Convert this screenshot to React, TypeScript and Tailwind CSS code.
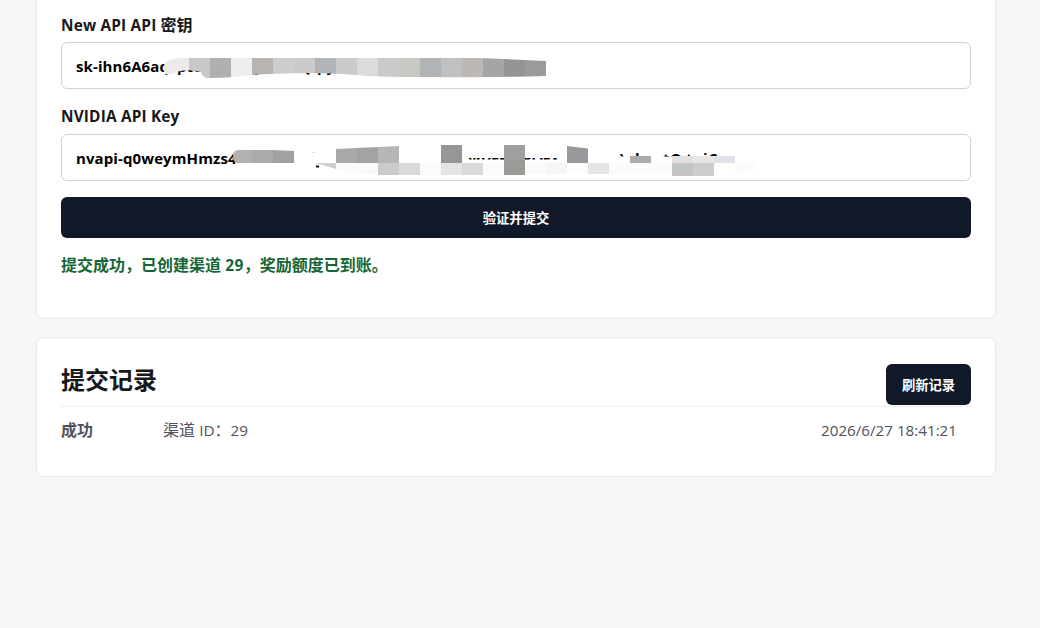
import type { ReactNode } from "react";

type Cell = [x: number, y: number, w: number, h: number, fill: string];

const keyCells: Cell[] = [
  [163, 57, 26, 22, "#edebea"],
  [189, 57, 21, 22, "#c9c8c6"],
  [210, 57, 21, 22, "#b2b0ae"],
  [231, 57, 21, 22, "#ecedec"],
  [252, 57, 21, 22, "#b7b4b2"],
  [273, 57, 21, 22, "#cccdcf"],
  [294, 57, 21, 22, "#cacaca"],
  [315, 57, 21, 22, "#b2b5b7"],
  [336, 57, 21, 22, "#cbcbcb"],
  [357, 57, 21, 22, "#d9dbdd"],
  [378, 57, 21, 22, "#cbcac8"],
  [399, 57, 21, 22, "#c8c7c4"],
  [420, 57, 21, 22, "#b1b4b6"],
  [441, 57, 21, 22, "#c0c0c0"],
  [462, 57, 21, 22, "#bcb8b4"],
  [483, 57, 21, 22, "#a5a5a5"],
  [504, 57, 21, 22, "#949597"],
  [525, 57, 21, 22, "#9c9b99"],
];

const nvidiaCells: Cell[] = [
  [231, 149, 21, 14, "#b2b1af"],
  [252, 149, 21, 14, "#acaba9"],
  [273, 149, 21, 14, "#a0a1a3"],
  [315, 163, 21, 12, "#cfd0d1"],
  [336, 145, 21, 18, "#a9a9a9"],
  [357, 145, 21, 18, "#a2a3a5"],
  [378, 145, 21, 18, "#b6b6b6"],
  [336, 163, 42, 12, "#f9f9f9"],
  [378, 163, 21, 12, "#c9cbca"],
  [399, 163, 21, 12, "#d9d9d9"],
  [420, 163, 21, 12, "#fbfbfb"],
  [441, 145, 21, 18, "#989694"],
  [441, 163, 21, 12, "#e4e4e4"],
  [462, 163, 21, 12, "#d9d9d9"],
  [483, 163, 21, 12, "#fbfbfb"],
  [504, 145, 21, 15, "#9f9f9f"],
  [504, 160, 21, 15, "#9c9a96"],
  [525, 163, 21, 11, "#fafafa"],
  [546, 163, 21, 11, "#f5f6f6"],
  [567, 145, 21, 18, "#98999d"],
  [567, 163, 21, 11, "#fcfcfc"],
  [588, 163, 21, 11, "#e4e4e4"],
  [609, 163, 63, 13, "#fbfbfb"],
  [630, 156, 21, 7, "#b0aba7"],
  [672, 156, 21, 7, "#e3e0df"],
  [693, 156, 21, 7, "#e8e6e4"],
  [714, 156, 21, 7, "#e0e2e7"],
  [672, 163, 21, 13, "#c2c4c6"],
  [693, 163, 21, 13, "#cfcdcb"],
  [714, 163, 21, 13, "#ffffff"],
  [735, 163, 21, 13, "#fbfbfb"],
];

function Cells({ cells }: { cells: Cell[] }) {
  return (
    <>
      {cells.map(([x, y, w, h, fill]) => (
        <rect key={`${x}-${y}`} x={x} y={y} width={w} height={h} fill={fill} />
      ))}
    </>
  );
}

function KeyMask() {
  return (
    <svg viewBox="61 42 910 47" className="pointer-events-none absolute -top-px -left-px h-[47px] w-[910px] text-[15px] font-bold">
      <clipPath id="key-mask">
        <path d="M163 67Q165 59 179 58H480L546 61V76Q500 77.500 420 77Q375 77 356 75Q320 72 284 73.500Q265 74 250 75Q232 78 208 78Q203 78 201 72Q190 69 180 71L168 75Q163 73 163 67Z" />
      </clipPath>
      <text y="72">
        <tspan x="177">ptcs</tspan>
        <tspan x="254">y</tspan>
        <tspan x="299">Q</tspan>
        <tspan x="317">py</tspan>
      </text>
      <g clipPath="url(#key-mask)">
        <Cells cells={keyCells} />
      </g>
    </svg>
  );
}

function NvidiaMask() {
  return (
    <svg viewBox="61 134 910 47" className="pointer-events-none absolute -top-px -left-px h-[47px] w-[910px] text-[15px] font-bold">
      <clipPath id="nvidia-mask">
        <path d="M233 156Q233 150 239 150H273L294 151V163H237Q233 162 233 156ZM315 163H336V149L399 146V163H441V145H462V163H504V145H525V163H567V146L588 148.500V163H630V156H651V163H672V156H735V163H756Q757 172 742 174H714V176H672V174H525V175H378L350 172L336 169Z" />
      </clipPath>
      <clipPath id="strip-middle">
        <rect x="466" y="158" width="97" height="1.500" />
      </clipPath>
      <clipPath id="strip-right">
        <rect x="618" y="152.500" width="110" height="4" />
      </clipPath>
      <rect x="316" y="165.500" width="3" height="2" fill="#111" />
      <rect x="312" y="152" width="3" height="1" fill="#ddd" />
      <text x="468" y="164" textLength="92" clipPath="url(#strip-middle)">
        vnzERHIROEX
      </text>
      <text y="164" clipPath="url(#strip-right)">
        <tspan x="620">\</tspan>
        <tspan x="635">l</tspan>
        <tspan x="663">t</tspan>
        <tspan x="670">O</tspan>
        <tspan x="686">t</tspan>
        <tspan x="703">i</tspan>
        <tspan x="708">C</tspan>
      </text>
      <g clipPath="url(#nvidia-mask)">
        <Cells cells={nvidiaCells} />
      </g>
    </svg>
  );
}

function Field({ label, value, children }: { label: ReactNode; value: ReactNode; children: ReactNode }) {
  return (
    <div>
      <div className="h-6 pt-px text-[15.4px] leading-6 font-bold tracking-[0.17px] text-[#18181b]">{label}</div>
      <div className="relative mt-1.5 flex h-[47px] items-center rounded-md border border-[#d1d2d6] bg-white px-3.5 pt-0.5 text-[15px] font-bold text-black">
        <span className="tracking-[0.1px]">{value}</span>
        {children}
      </div>
    </div>
  );
}

export default function App() {
  return (
    <main className="h-[628px] overflow-hidden bg-[#f6f7f9] pr-11 pl-9 font-['Open_Sans','Noto_Sans_CJK_SC',sans-serif]">
      <section className="h-[319px] rounded-b-lg border border-t-0 border-[#e5e7eb] bg-white px-6 pt-3">
        <div className="flex flex-col gap-[15px]">
          <Field
            label={<>New API API <span className="text-base tracking-normal">密钥</span></>}
            value="sk-ihn6A6aq"
          >
            <KeyMask />
          </Field>
          <Field label="NVIDIA API Key" value="nvapi-q0weymHmzs4">
            <NvidiaMask />
          </Field>
        </div>
        <button className="mt-4 flex h-[41px] w-full items-center justify-center rounded-md bg-[#111827] pt-0.5 text-[13.3px] font-bold text-white">
          验证并提交
        </button>
        <p className="mt-[15px] text-base leading-6 font-semibold text-[#166534]">
          提交成功，已创建渠道 <span className="text-[15.5px] font-bold tracking-[0.4px]">29</span>，奖励额度已到账。
        </p>
      </section>

      <section className="mt-[18px] h-[140px] rounded-lg border border-[#e5e7eb] bg-white px-6 pt-[26px]">
        <div className="flex justify-between">
          <h2 className="text-2xl leading-8 font-bold text-[#18181b]">提交记录</h2>
          <button className="h-[41px] w-[85px] rounded-md bg-[#111827] pt-0.5 text-[13.3px] font-bold text-white">
            刷新记录
          </button>
        </div>
        <div className="mt-px flex border-t border-[#eceef1] pt-[11px] pr-3.5 text-base leading-6 text-[#52525b]">
          <strong className="w-[102px] font-semibold">成功</strong>
          <span>渠道 <span className="text-[15.3px]">ID</span>：<span className="text-[15.3px]">29</span></span>
          <time className="ml-auto text-[15.2px]">2026/6/27 18:41:21</time>
        </div>
      </section>
    </main>
  );
}
